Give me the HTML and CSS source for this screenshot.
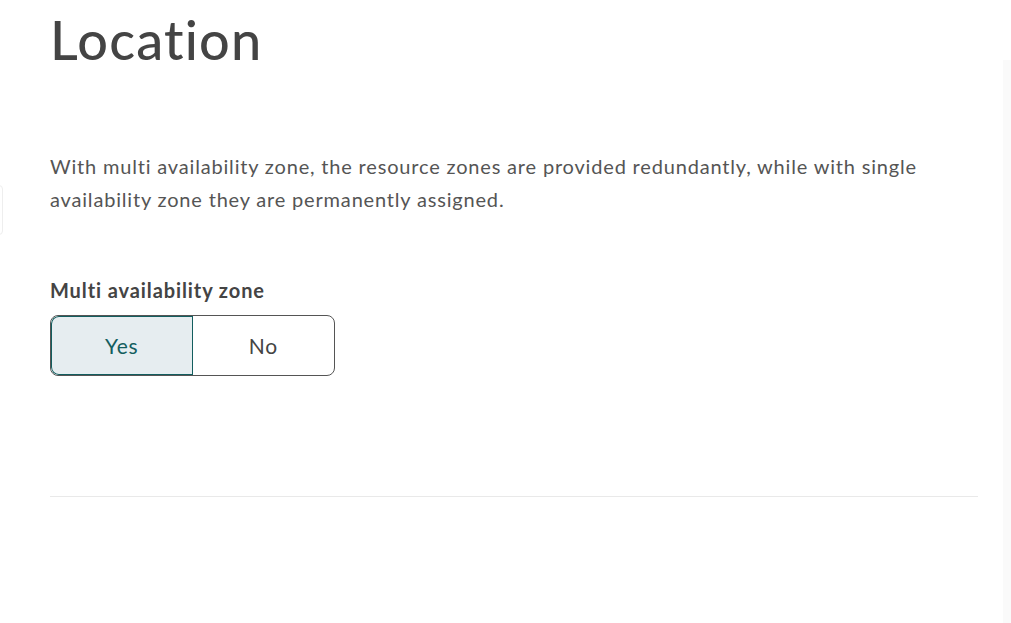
FILE: index.html
```html
<!doctype html>
<html lang="en">
<head>
    <meta charset="UTF-8">
    <title>Location</title>
    <link rel="stylesheet" href="styles.css">
</head>
<body>
    <div class="edge-card"></div>
    <div class="page">
        <h1 class="title">Location</h1>
        <p class="intro">With multi availability zone, the resource zones are provided redundantly, while with single availability zone they are permanently assigned.</p>

        <div class="field">
            <div class="field-label">Multi availability zone</div>
            <div class="toggle">
                <a href="javascript:void(0)" class="toggle-btn active">Yes</a>
                <a href="javascript:void(0)" class="toggle-btn">No</a>
            </div>
        </div>

        <div class="divider"></div>
    </div>
    <div class="scroll-shade"></div>
</body>
</html>
```

FILE: styles.css
```css
*{
    padding: 0;
    margin: 0;
    box-sizing: border-box;
}
html,body{
    height: 100%;
    overflow: hidden;
}
body{
    background-color: #fff;
    font-family: Lato, "Open Sans", sans-serif;
    color: #555;
}
a{
    text-decoration: none;
}
.page{
    width: 928px;
    margin-left: 50px;
}
.title{
    font-size: 54px;
    font-weight: 500;
    color: #444;
    line-height: 1;
    margin-top: 13px;
    letter-spacing: 1.2px;
}
.intro{
    margin-top: 83px;
    font-size: 20px;
    line-height: 33px;
    color: #555;
    letter-spacing: 0.82px;
    width: 900px;
}
.field{
    margin-top: 62px;
}
.field-label{
    font-size: 20px;
    font-weight: 700;
    color: #444;
    line-height: 24px;
    letter-spacing: 0.9px;
}
.toggle{
    display: flex;
    width: 285px;
    height: 61px;
    margin-top: 13px;
    border: 1px solid #555;
    border-radius: 8px;
    overflow: hidden;
}
.toggle-btn{
    flex: 1;
    display: flex;
    align-items: center;
    justify-content: center;
    font-size: 21px;
    letter-spacing: 0.8px;
    color: #444;
}
.toggle-btn.active{
    background-color: #e6edf0;
    color: #135e5f;
    box-shadow: inset 0 0 0 1px #135e5f;
    border-radius: 8px 0 0 8px;
}
.divider{
    margin-top: 120px;
    height: 1px;
    background-color: #e9e9e9;
}
.edge-card{
    position: absolute;
    left: -10px;
    top: 185px;
    width: 13px;
    height: 50px;
    border: 1px solid #eee;
    border-radius: 4px;
}
.scroll-shade{
    position: absolute;
    right: 0;
    top: 60px;
    width: 8px;
    height: 563px;
    background-color: #fafafa;
}
```
